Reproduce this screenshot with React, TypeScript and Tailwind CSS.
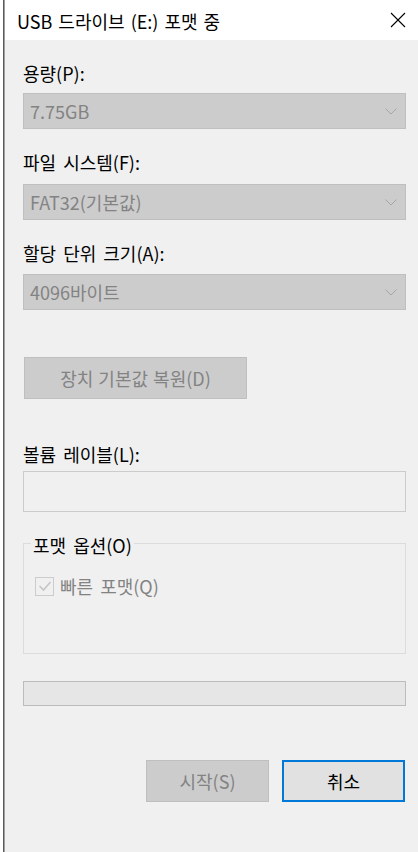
import React from "react";

const font = { fontFamily: '"Noto Sans CJK KR", "Noto Sans", sans-serif' };

function Chevron() {
  return (
    <svg width="12" height="7" viewBox="0 0 12 7" className="shrink-0">
      <path d="M0.5 0.5 L6 6 L11.5 0.5" fill="none" stroke="#a6a6a6" strokeWidth="1" />
    </svg>
  );
}

function Select({ value, mt }: { value: string; mt: string }) {
  return (
    <div
      className={`${mt} h-[36px] w-full border border-[#bfbfbf] bg-[#cccccc] flex items-center justify-between pl-[6px] pr-[8px] text-[18px] leading-[22px] text-[#838383]`}
    >
      <span>{value}</span>
      <Chevron />
    </div>
  );
}

function Label({ text, mt }: { text: string; mt: string }) {
  return <div className={`${mt} h-[20px] leading-[20px] text-[18px] text-black whitespace-nowrap`}>{text}</div>;
}

export default function App() {
  return (
    <div className="w-[418px] h-[852px] flex bg-white overflow-hidden [word-spacing:3px]" style={font}>
      <div className="w-[3px] bg-white" />
      <div className="w-[1px] bg-[#5a5a5a]" />
      <div className="w-[1px] bg-[#a0a0a0]" />
      <div className="flex-1 flex flex-col">
        <div className="h-[40px] bg-white flex items-center justify-between pl-[12px] pr-[12px]">
          <span className="text-[18px] text-black leading-[20px] mt-[1px] [word-spacing:2px]">USB 드라이브 (E:) 포맷 중</span>
          <svg width="16" height="16" viewBox="0 0 16 16">
            <path d="M1 1 L15 15 M15 1 L1 15" stroke="#000" strokeWidth="1.1" fill="none" />
          </svg>
        </div>
        <div className="flex-1 bg-[#f0f0f0] pl-[18px] pr-[12px] flex flex-col">
          <Label text="용량(P):" mt="mt-[23px]" />
          <Select value="7.75GB" mt="mt-[10px]" />
          <Label text="파일 시스템(F):" mt="mt-[23px]" />
          <Select value="FAT32(기본값)" mt="mt-[12px]" />
          <Label text="할당 단위 크기(A):" mt="mt-[23px]" />
          <Select value="4096바이트" mt="mt-[11px]" />
          <div className="mt-[47px] ml-[1px] w-[223px] h-[42px] border border-[#bfbfbf] bg-[#cccccc] flex items-center justify-center text-[18px] leading-[22px] text-[#838383] [word-spacing:1px]">
            장치 기본값 복원(D)
          </div>
          <Label text="볼륨 레이블(L):" mt="mt-[45px]" />
          <div className="mt-[7px] h-[41px] w-full border border-[#cccccc] bg-[#f0f0f0]" />
          <div className="mt-[31px] h-[111px] w-full border border-[#dcdcdc] relative">
            <span className="absolute left-[7px] top-[-9px] px-[2px] bg-[#f0f0f0] text-[18px] leading-[20px] text-black whitespace-nowrap">
              포맷 옵션(O)
            </span>
            <div className="mt-[32px] ml-[11px] flex items-center gap-[6px]">
              <div className="w-[19px] h-[19px] border border-[#cccccc] bg-[#f0f0f0] flex items-center justify-center">
                <svg width="14" height="12" viewBox="0 0 14 12">
                  <path d="M1.5 6 L5.5 10 L12.5 2" fill="none" stroke="#c6c6c6" strokeWidth="1.6" />
                </svg>
              </div>
              <span className="text-[18px] leading-[20px] text-[#838383]">빠른 포맷(Q)</span>
            </div>
          </div>
          <div className="mt-[27px] h-[25px] w-full border border-[#bcbcbc] bg-[#e6e6e6]" />
          <div className="mt-[54px] flex justify-end gap-[13px] pr-[1px]">
            <div className="w-[123px] h-[42px] border border-[#bfbfbf] bg-[#cccccc] flex items-center justify-center text-[18px] leading-[22px] text-[#838383]">
              시작(S)
            </div>
            <div className="w-[123px] h-[42px] border-2 border-[#0078d7] bg-[#e1e1e1] flex items-center justify-center text-[18px] leading-[22px] text-black">
              취소
            </div>
          </div>
        </div>
      </div>
    </div>
  );
}
